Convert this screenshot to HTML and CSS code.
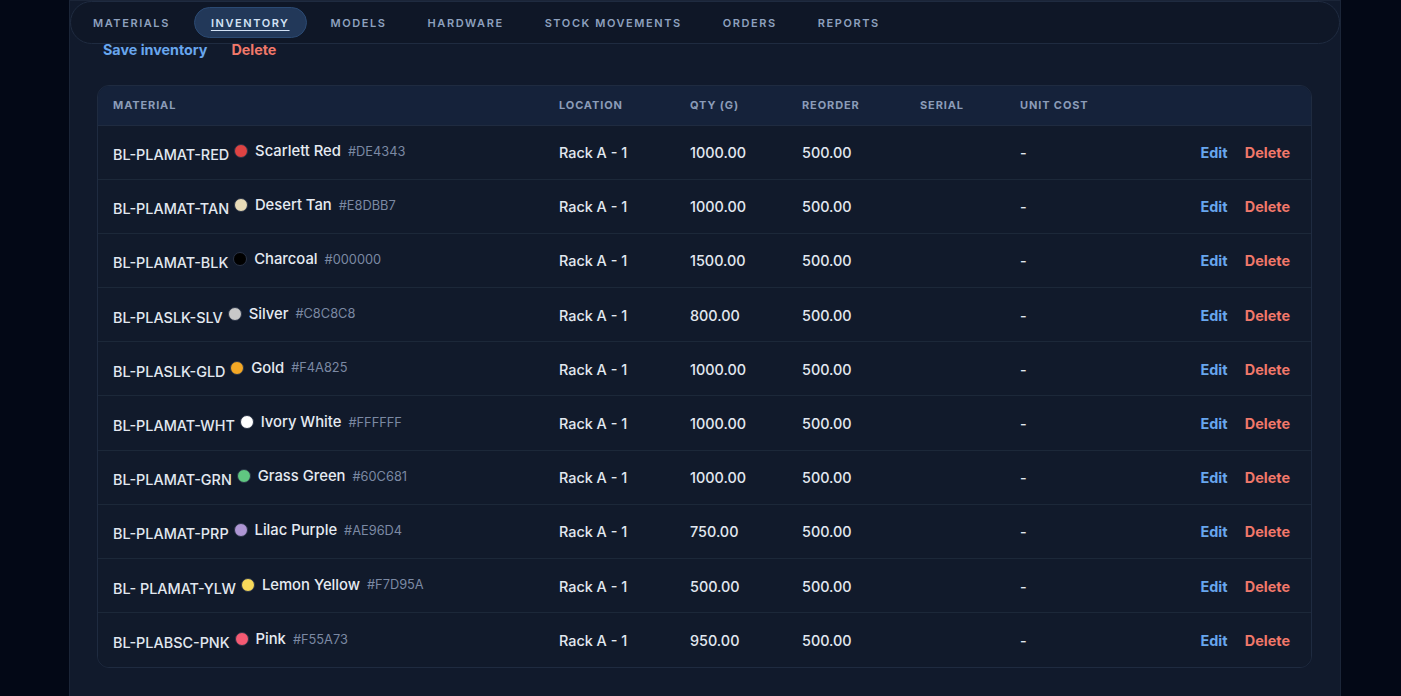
FILE: index.html
```html
<!DOCTYPE html>
<html lang="en">

<head>
    <meta charset="UTF-8">
    <meta name="viewport" content="width=device-width, initial-scale=1.0">
    <title>Inventory</title>
    <link rel="stylesheet" href="styles.css">
</head>

<body>
    <div id="page">
        <nav id="tabs">
            <a href="">Materials</a>
            <a href="" class="active">Inventory</a>
            <a href="">Models</a>
            <a href="">Hardware</a>
            <a href="">Stock movements</a>
            <a href="">Orders</a>
            <a href="">Reports</a>
        </nav>
        <div id="actions">
            <a href="" class="link-blue">Save inventory</a>
            <a href="" class="link-red">Delete</a>
        </div>
        <div id="table-wrap">
            <table id="inventory">
                <colgroup>
                    <col class="c-material">
                    <col class="c-location">
                    <col class="c-qty">
                    <col class="c-reorder">
                    <col class="c-serial">
                    <col class="c-cost">
                    <col>
                </colgroup>
                <thead>
                    <tr>
                        <th>Material</th>
                        <th>Location</th>
                        <th>Qty (g)</th>
                        <th>Reorder</th>
                        <th>Serial</th>
                        <th>Unit cost</th>
                        <th></th>
                    </tr>
                </thead>
                <tbody id="rows">
                </tbody>
            </table>
        </div>
    </div>
    <template id="row-template">
        <tr>
            <td>
                <span class="code"></span>
                <span class="color-info">
                    <span class="swatch"></span>
                    <span class="color-name"></span>
                    <span class="hex"></span>
                </span>
            </td>
            <td>Rack A - 1</td>
            <td class="qty"></td>
            <td>500.00</td>
            <td></td>
            <td>-</td>
            <td class="row-actions">
                <a href="" class="link-blue">Edit</a>
                <a href="" class="link-red">Delete</a>
            </td>
        </tr>
    </template>
    <script>
        const items = [
            ["BL-PLAMAT-RED", "Scarlett Red", "#DE4343", "1000.00"],
            ["BL-PLAMAT-TAN", "Desert Tan", "#E8DBB7", "1000.00"],
            ["BL-PLAMAT-BLK", "Charcoal", "#000000", "1500.00"],
            ["BL-PLASLK-SLV", "Silver", "#C8C8C8", "800.00"],
            ["BL-PLASLK-GLD", "Gold", "#F4A825", "1000.00"],
            ["BL-PLAMAT-WHT", "Ivory White", "#FFFFFF", "1000.00"],
            ["BL-PLAMAT-GRN", "Grass Green", "#60C681", "1000.00"],
            ["BL-PLAMAT-PRP", "Lilac Purple", "#AE96D4", "750.00"],
            ["BL- PLAMAT-YLW", "Lemon Yellow", "#F7D95A", "500.00"],
            ["BL-PLABSC-PNK", "Pink", "#F55A73", "950.00"]
        ]

        const tbody = document.getElementById("rows")
        const template = document.getElementById("row-template")

        //fill the table from the data
        items.forEach(([code, name, hex, qty]) => {
            const row = document.importNode(template.content, true)
            row.querySelector(".code").textContent = code
            row.querySelector(".swatch").style.backgroundColor = hex
            row.querySelector(".color-name").textContent = name
            row.querySelector(".hex").textContent = hex
            row.querySelector(".qty").textContent = qty
            tbody.appendChild(row)
        })
    </script>
</body>

</html>
```

FILE: styles.css
```css
* {
    box-sizing: border-box;
}

body {
    margin: 0;
    background-color: #030816;
    font-family: Inter, "Noto Sans", Arial, sans-serif;
    color: #e2e8f0;
}

a {
    text-decoration: none;
}

#page {
    width: 1272px;
    min-height: 696px;
    margin-left: 69px;
    background-color: #111a2c;
    border-left: 1px solid #1b2538;
    border-right: 1px solid #1b2538;
    border-top: 1px solid #1b2538;
}

#tabs {
    display: flex;
    align-items: center;
    gap: 7px;
    height: 43px;
    padding: 0 5px;
    background-color: #0f1727;
    border: 1px solid #1f2b40;
    border-radius: 22px;
}

#tabs a {
    display: flex;
    align-items: center;
    height: 31px;
    padding: 0 16px;
    border-radius: 16px;
    border: 1px solid transparent;
    font-size: 11px;
    font-weight: 600;
    letter-spacing: 0.143em;
    text-transform: uppercase;
    color: #8ea1bf;
}

#tabs a.active {
    background-color: #223859;
    border-color: #2b4a73;
    color: #d3e2f6;
    text-decoration: underline;
    text-underline-offset: 3px;
}

#actions {
    display: flex;
    gap: 24px;
    margin-top: -3px;
    padding-left: 33px;
    font-size: 14.3px;
    font-weight: 700;
    line-height: 17px;
}

.link-blue {
    color: #68a6ee;
}

.link-red {
    color: #f1786a;
}

#table-wrap {
    margin: 27px 28px 0 27px;
    border: 1px solid #1f2b40;
    border-radius: 12px;
    overflow: hidden;
}

#inventory {
    width: 100%;
    border-collapse: collapse;
    table-layout: fixed;
}

.c-material {
    width: 446px;
}

.c-location {
    width: 131px;
}

.c-qty {
    width: 112px;
}

.c-reorder {
    width: 118px;
}

.c-serial {
    width: 100px;
}

.c-cost {
    width: 150px;
}

#inventory th {
    height: 39px;
    padding: 0 15px;
    background-color: #15223a;
    border-bottom: 1px solid #1f2b40;
    text-align: left;
    font-size: 11px;
    font-weight: 700;
    letter-spacing: 0.08em;
    text-transform: uppercase;
    color: #8b9cb8;
}

#inventory td {
    height: 54.2px;
    padding: 1px 15px 0;
    background-color: #111a2b;
    border-bottom: 1px solid #1c2839;
    font-size: 14.4px;
    font-weight: 500;
    color: #e2e8f0;
    white-space: nowrap;
}

#inventory tr:last-child td {
    border-bottom: none;
}

.color-info {
    display: inline-flex;
    align-items: center;
    vertical-align: 2px;
    margin-left: 1px;
}

.swatch {
    width: 14px;
    height: 14px;
    border-radius: 50%;
    border: 1px solid #2a3346;
    margin-right: 7px;
}

.color-name {
    font-size: 14.8px;
    color: #e6ebf2;
    margin-right: 7px;
}

.hex {
    font-size: 12.8px;
    font-weight: 400;
    color: #7b89a3;
}

.row-actions {
    text-align: right;
    padding-right: 21px !important;
    font-weight: 700 !important;
}

.row-actions a + a {
    margin-left: 14px;
}
```
